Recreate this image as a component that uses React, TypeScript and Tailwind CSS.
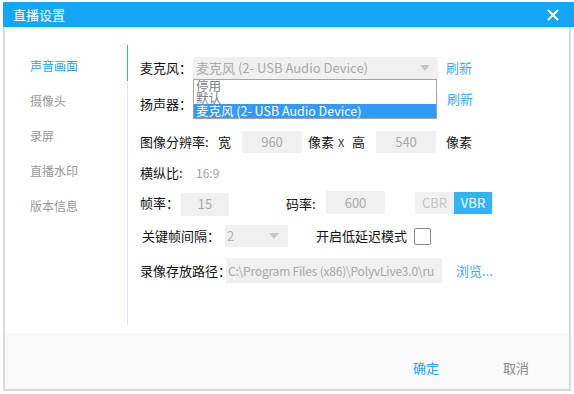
import { X } from "lucide-react";

const navItems = ["声音画面", "摄像头", "录屏", "直播水印", "版本信息"];

function Arrow() {
    return (
        <svg width="10" height="6" viewBox="0 0 10 6" className="shrink-0">
            <path d="M0 0 L10 0 L5 6 Z" fill="#c4c4c4" />
        </svg>
    );
}

function Field({ value, className }: { value: string; className: string }) {
    return (
        <div className={`shrink-0 bg-[#f0f0f0] text-[#a8a8a8] text-[13px] flex items-center justify-center ${className}`}>
            {value}
        </div>
    );
}

export default function App() {
    return (
        <div className="w-[574px] h-[394px] bg-white pt-[2px] pl-[3px] font-['Noto_Sans_CJK_SC',sans-serif] text-[13px] leading-[16px] text-[#111] whitespace-nowrap">
            <div className="w-[571px] h-[25px] bg-[#16a4f5] flex items-center justify-between pl-[10px] pr-[12px]">
                <span className="text-white text-[13px]">直播设置</span>
                <X className="text-white" size={18} strokeWidth={2.6} />
            </div>
            <div className="w-[568px] h-[364px] border-x-2 border-b-2 border-[#dadada] flex flex-col">
                <div className="h-[306px] flex">
                    {/* left nav */}
                    <div className="w-[122px] pt-[21px] pl-[25px] flex flex-col">
                        {navItems.map((item, i) => (
                            <div key={item}
                                className={`h-[35px] flex items-center text-[12px] ${i === 0 ? "text-[#1e9ff2]" : "text-[#999]"}`}
                            >{item}</div>
                        ))}
                    </div>
                    <div className="w-px mt-[18px] mb-[8px] bg-[#e3e1f3] flex flex-col">
                        <div className="h-[36px] bg-[#3fa9f5]" />
                    </div>

                    {/* form */}
                    <div className="flex-1 pl-[12px] flex flex-col">
                        <div className="mt-[30px] h-[22px] flex items-center">
                            <span className="w-[53px] shrink-0">麦克风：</span>
                            <div className="relative w-[245px] h-[22px] bg-[#f0f0f0] flex items-center justify-between pl-[3px] pr-[8px]">
                                <span className="text-[#a8a8a8] text-[13px]">麦克风 (2- USB Audio Device)</span>
                                <Arrow />
                                <div className="absolute left-0 top-[22px] w-[244px] h-[40px] bg-white border border-[#a5a5a5] flex flex-col z-10 text-[12.5px] leading-[12px]">
                                    <div className="h-[12px] pl-[2px] text-[#808080]">停用</div>
                                    <div className="h-[12px] pl-[2px] text-[#808080]">默认</div>
                                    <div className="h-[14px] pl-[2px] bg-[#3399ff] text-white flex items-center">麦克风 (2- USB Audio Device)</div>
                                </div>
                            </div>
                            <span className="ml-[8px] text-[#3fa9f5]">刷新</span>
                        </div>

                        <div className="mt-[14px] h-[22px] flex items-center">
                            <span className="w-[53px] shrink-0">扬声器：</span>
                            <div className="w-[245px] h-[22px] bg-[#f0f0f0]" />
                            <span className="ml-[9px] -mt-[10px] text-[#3fa9f5]">刷新</span>
                        </div>

                        <div className="mt-[16px] h-[22px] flex items-center">
                            <span className="w-[78px] shrink-0">图像分辨率:</span>
                            <span className="w-[24px] shrink-0">宽</span>
                            <Field value="960" className="w-[60px] h-[22px]" />
                            <span className="ml-[6px] w-[30px] shrink-0">像素</span>
                            <span className="w-[14px] shrink-0 text-[11px] text-[#1a2a5a]">X</span>
                            <span className="w-[24px] shrink-0">高</span>
                            <Field value="540" className="w-[60px] h-[22px]" />
                            <span className="ml-[10px]">像素</span>
                        </div>

                        <div className="mt-[10px] h-[20px] flex items-center">
                            <span className="w-[56px] shrink-0">横纵比:</span>
                            <span className="text-[12px] text-[#a0a0a0]">16:9</span>
                        </div>

                        <div className="mt-[8px] h-[23px] flex items-center">
                            <span className="w-[41px] shrink-0">帧率：</span>
                            <Field value="15" className="w-[48px] h-[23px] mt-[3px]" />
                            <span className="ml-[57px] w-[40px] shrink-0 mt-[2px]">码率:</span>
                            <Field value="600" className="w-[59px] h-[23px]" />
                            <div className="ml-[30px] flex h-[22px]">
                                <div className="w-[39px] bg-[#f0f0f0] text-[#c4c4c4] flex items-center justify-center">CBR</div>
                                <div className="w-[38px] bg-[#2fb4f6] text-white flex items-center justify-center">VBR</div>
                            </div>
                        </div>

                        <div className="mt-[11px] h-[22px] flex items-center">
                            <span className="w-[85px] shrink-0 pl-[2px]">关键帧间隔：</span>
                            <div className="w-[63px] h-[22px] shrink-0 bg-[#f0f0f0] flex items-center justify-between pl-[2px] pr-[9px]">
                                <span className="text-[#b0b0b0]">2</span>
                                <Arrow />
                            </div>
                            <span className="ml-[28px]">开启低延迟模式</span>
                            <div className="ml-[7px] w-[17px] h-[17px] shrink-0 border border-[#888] rounded-[2px] bg-white" />
                        </div>

                        <div className="mt-[11px] h-[25px] flex items-center">
                            <span className="w-[86px] shrink-0">录像存放路径：</span>
                            <div className="w-[216px] h-[25px] shrink-0 bg-[#f0f0f0] text-[#a8a8a8] text-[12px] tracking-[-0.2px] pl-[2px] flex items-center overflow-hidden">
                                C:\Program Files (x86)\PolyvLive3.0\ru
                            </div>
                            <span className="ml-[14px] text-[#3fa9f5]">浏览...</span>
                        </div>
                    </div>
                </div>

                {/* footer */}
                <div className="flex-1 bg-[#f9f9f9] flex justify-end items-start pt-[27px] pr-[40px] gap-[64px]">
                    <span className="text-[#2b9ff0]">确定</span>
                    <span className="text-[#8a8a8a]">取消</span>
                </div>
            </div>
        </div>
    );
}
